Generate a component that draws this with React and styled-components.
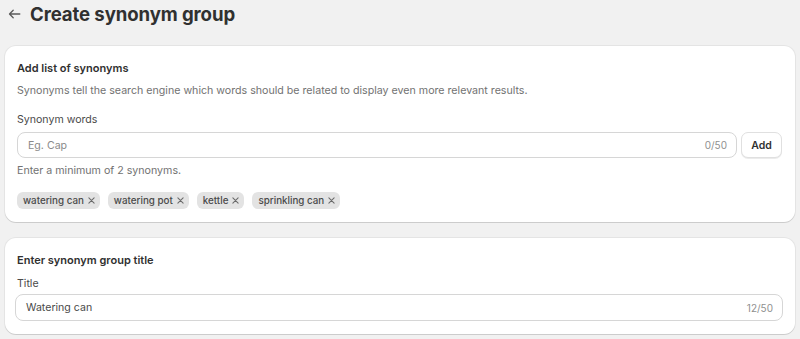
import styled, { createGlobalStyle } from 'styled-components'

const GlobalStyle = createGlobalStyle`
  html, body {
    margin: 0;
    padding: 0;
    background: #f1f1f1;
    font-family: Inter, "Noto Sans", sans-serif;
    color: #303030;
  }
`

const synonyms = ['watering can', 'watering pot', 'kettle', 'sprinkling can']

function ArrowLeft() {
  return (
    <svg width="13" height="12" viewBox="0 0 13 12" fill="none">
      <path
        d="M11.8 6H1.6M5.2 2.3 1.5 6l3.7 3.7"
        stroke="#5a5a5a"
        strokeWidth="1.3"
        strokeLinecap="round"
        strokeLinejoin="round"
      />
    </svg>
  )
}

function CloseIcon() {
  return (
    <svg width="7" height="7" viewBox="0 0 8 8" fill="none">
      <path d="M1 1l6 6M7 1 1 7" stroke="#6a6a6a" strokeWidth="1.2" strokeLinecap="round" />
    </svg>
  )
}

export default function App() {
  return (
    <Page>
      <GlobalStyle />
      <Header>
        <ArrowLeft />
        <PageTitle>Create synonym group</PageTitle>
      </Header>

      <Card $pad="15px 12px 13px 12px">
        <CardTitle>Add list of synonyms</CardTitle>
        <HelpText $mt="9px">
          Synonyms tell the search engine which words should be related to display even more relevant results.
        </HelpText>
        <Label $mt="15px">Synonym words</Label>
        <InputRow>
          <TextField>
            <Placeholder>Eg. Cap</Placeholder>
            <Counter>0/50</Counter>
          </TextField>
          <AddButton>Add</AddButton>
        </InputRow>
        <HelpText $mt="6px">Enter a minimum of 2 synonyms.</HelpText>
        <TagList>
          {synonyms.map((word) => (
            <Tag key={word}>
              {word}
              <CloseIcon />
            </Tag>
          ))}
        </TagList>
      </Card>

      <Card $pad="15px 12px 13px 10px" $mt="16px">
        <CardTitle $ml="2px">Enter synonym group title</CardTitle>
        <Label $mt="10px" $ml="2px">Title</Label>
        <TextField $wide>
          <Value>Watering can</Value>
          <Counter>12/50</Counter>
        </TextField>
      </Card>
    </Page>
  )
}

const Page = styled.div`
  width: 800px;
  height: 339px;
  box-sizing: border-box;
  padding: 0 5px;
  overflow: hidden;
`

const Header = styled.div`
  display: flex;
  align-items: center;
  height: 28px;
  gap: 9px;
  padding-left: 3px;
  margin-bottom: 18px;
`

const PageTitle = styled.h1`
  margin: 0;
  font-size: 18.6px;
  font-weight: 700;
  letter-spacing: -0.1px;
  color: #303030;
`

const Card = styled.section`
  background: #fff;
  border-radius: 11px;
  box-shadow: 0 1px 0 rgba(0, 0, 0, 0.1), 0 0 0 1px rgba(0, 0, 0, 0.05);
  padding: ${(p) => p.$pad};
  margin-top: ${(p) => p.$mt || '0'};
`

const CardTitle = styled.h2`
  margin: 0 0 0 ${(p) => p.$ml || '0'};
  font-size: 11px;
  font-weight: 600;
  line-height: 14px;
  color: #303030;
`

const HelpText = styled.p`
  margin: ${(p) => p.$mt} 0 0;
  font-size: 10.65px;
  line-height: 14px;
  color: #727272;
`

const Label = styled.div`
  margin: ${(p) => p.$mt} 0 0 ${(p) => p.$ml || '0'};
  font-size: 10.6px;
  line-height: 14px;
  color: #4a4a4a;
`

const InputRow = styled.div`
  display: flex;
  gap: 4px;
  margin-top: 5px;
  width: 765px;
`

const TextField = styled.div`
  flex: 1;
  display: flex;
  align-items: center;
  justify-content: space-between;
  box-sizing: border-box;
  border: 1px solid #d6d6d6;
  border-radius: 8px;
  padding: 0 9px 0 10px;
  font-size: 10.6px;
  margin-top: ${(p) => (p.$wide ? '3px' : '0')};
  width: ${(p) => (p.$wide ? '768px' : 'auto')};
  height: ${(p) => (p.$wide ? '27px' : '26px')};
`

const Placeholder = styled.span`
  color: #8a8a8a;
`

const Value = styled.span`
  color: #4a4a4a;
`

const Counter = styled.span`
  color: #8f8f8f;
  font-size: 10px;
`

const AddButton = styled.button`
  width: 41px;
  height: 26px;
  border: 1px solid #e0e0e0;
  border-radius: 7px;
  background: #fff;
  box-shadow: 0 1px 0 rgba(0, 0, 0, 0.08);
  font-family: inherit;
  font-size: 10.5px;
  font-weight: 600;
  color: #303030;
  padding: 0;
`

const TagList = styled.div`
  display: flex;
  gap: 8px;
  margin-top: 14px;
`

const Tag = styled.span`
  display: inline-flex;
  align-items: center;
  gap: 4px;
  height: 17px;
  padding: 0 5px 0 6px;
  border-radius: 6px;
  background: #e3e3e3;
  font-size: 9.8px;
  font-weight: 500;
  color: #4a4a4a;
`
